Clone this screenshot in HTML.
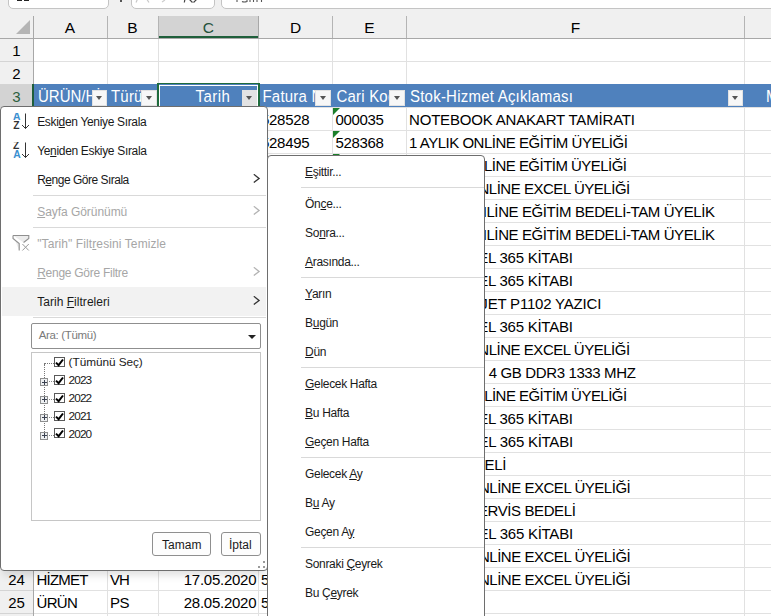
<!DOCTYPE html><html><head><meta charset="utf-8"><style>
*{box-sizing:border-box;margin:0;padding:0}
html,body{width:771px;height:616px;overflow:hidden;background:#fff;font-family:"Liberation Sans",sans-serif}
body{position:relative}
div,svg{position:absolute;white-space:nowrap}
u{text-decoration:underline;text-underline-offset:1px;text-decoration-thickness:1px}
</style></head><body>
<div style="left:0px;top:0px;width:771px;height:38px;background:#f0f0f0;"></div>
<div style="left:8px;top:-22px;width:101px;height:31px;background:#fff;border:1px solid #c4c4c4;border-radius:5px"></div>
<div style="left:17px;top:0px;width:4.5px;height:1px;background:#222;"></div>
<div style="left:24px;top:0px;width:4.5px;height:1px;background:#222;"></div>
<div style="left:119.5px;top:0px;width:2px;height:1.5px;background:#555;"></div>
<div style="left:131px;top:-22px;width:84px;height:31px;background:#fff;border:1px solid #c4c4c4;border-radius:5px"></div>
<svg style="left:135px;top:0" width="70" height="4"><path d="M3 -2 L1 2.5 M11 -2 L14 2.5" stroke="#c8c8c8" stroke-width="1.2"/><path d="M27 2 L30 0" stroke="#ccc" stroke-width="1.2"/><path d="M50 -1 L49.3 2.5 M54 -1 L57.5 2.5 M62 -1 L58.5 2.5" stroke="#444" stroke-width="1.2" fill="none"/></svg>
<div style="left:221px;top:-22px;width:600px;height:31px;background:#fff;border:1px solid #c4c4c4;border-radius:5px"></div>
<svg style="left:228px;top:0" width="40" height="4"><path d="M9 -1 V2 M14 1.5 Q16 2.5 19 1.5 V-1 M22 -1 V2 M25.5 -1 V2 M29 -1 V2 M33.5 -1 V2" stroke="#555" stroke-width="1.1" fill="none"/></svg>
<div style="left:16px;top:20px;width:0;height:0;border-left:14px solid transparent;border-bottom:14px solid #b5b5b5"></div>
<div style="left:33px;top:16px;width:1px;height:22px;background:#b4b4b4;"></div>
<div style="left:107px;top:16px;width:1px;height:22px;background:#b4b4b4;"></div>
<div style="left:158px;top:16px;width:1px;height:22px;background:#b4b4b4;"></div>
<div style="left:258px;top:16px;width:1px;height:22px;background:#b4b4b4;"></div>
<div style="left:332px;top:16px;width:1px;height:22px;background:#b4b4b4;"></div>
<div style="left:406px;top:16px;width:1px;height:22px;background:#b4b4b4;"></div>
<div style="left:744px;top:16px;width:1px;height:22px;background:#b4b4b4;"></div>
<div style="left:33px;top:16px;width:1px;height:22px;background:#a8a8a8;"></div>
<div style="left:159px;top:16px;width:100px;height:22px;background:#d3d3d3;"></div>
<div style="left:159px;top:36px;width:100px;height:2px;background:#1f5f3b;"></div>
<div style="left:258px;top:16px;width:1px;height:22px;background:#a8a8a8;"></div>
<div style="left:33px;top:19.88px;width:74px;text-align:center;font-size:15.5px;line-height:15.5px;color:#000">A</div>
<div style="left:107px;top:19.88px;width:51px;text-align:center;font-size:15.5px;line-height:15.5px;color:#000">B</div>
<div style="left:158px;top:19.88px;width:100.5px;text-align:center;font-size:15.5px;line-height:15.5px;color:#24513a">C</div>
<div style="left:258.5px;top:19.88px;width:74.0px;text-align:center;font-size:15.5px;line-height:15.5px;color:#000">D</div>
<div style="left:332.5px;top:19.88px;width:74.0px;text-align:center;font-size:15.5px;line-height:15.5px;color:#000">E</div>
<div style="left:406.5px;top:19.88px;width:338.0px;text-align:center;font-size:15.5px;line-height:15.5px;color:#000">F</div>
<div style="left:0px;top:38px;width:771px;height:1px;background:#a8a8a8;"></div>
<div style="left:0px;top:39px;width:33px;height:600px;background:#f0f0f0;"></div>
<div style="left:33px;top:38px;width:1px;height:600px;background:#a8a8a8;"></div>
<div style="left:0;top:43.30px;width:33px;text-align:center;font-size:15px;line-height:15px;color:#000">1</div>
<div style="left:0px;top:61px;width:33px;height:1px;background:#d4d4d4;"></div>
<div style="left:0;top:66.30px;width:33px;text-align:center;font-size:15px;line-height:15px;color:#000">2</div>
<div style="left:0px;top:84px;width:33px;height:1px;background:#d4d4d4;"></div>
<div style="left:0px;top:85px;width:33px;height:22px;background:#d3d3d3;"></div>
<div style="left:32px;top:84px;width:2px;height:23px;background:#1f5f3b;"></div>
<div style="left:0;top:89.30px;width:33px;text-align:center;font-size:15px;line-height:15px;color:#2b5e40">3</div>
<div style="left:0px;top:107px;width:33px;height:1px;background:#d4d4d4;"></div>
<div style="left:0;top:112.30px;width:33px;text-align:center;font-size:15px;line-height:15px;color:#000">4</div>
<div style="left:0px;top:130px;width:33px;height:1px;background:#d4d4d4;"></div>
<div style="left:0;top:135.30px;width:33px;text-align:center;font-size:15px;line-height:15px;color:#000">5</div>
<div style="left:0px;top:153px;width:33px;height:1px;background:#d4d4d4;"></div>
<div style="left:0;top:158.30px;width:33px;text-align:center;font-size:15px;line-height:15px;color:#000">6</div>
<div style="left:0px;top:176px;width:33px;height:1px;background:#d4d4d4;"></div>
<div style="left:0;top:181.30px;width:33px;text-align:center;font-size:15px;line-height:15px;color:#000">7</div>
<div style="left:0px;top:199px;width:33px;height:1px;background:#d4d4d4;"></div>
<div style="left:0;top:204.30px;width:33px;text-align:center;font-size:15px;line-height:15px;color:#000">8</div>
<div style="left:0px;top:222px;width:33px;height:1px;background:#d4d4d4;"></div>
<div style="left:0;top:227.30px;width:33px;text-align:center;font-size:15px;line-height:15px;color:#000">9</div>
<div style="left:0px;top:245px;width:33px;height:1px;background:#d4d4d4;"></div>
<div style="left:0;top:250.30px;width:33px;text-align:center;font-size:15px;line-height:15px;color:#000">10</div>
<div style="left:0px;top:268px;width:33px;height:1px;background:#d4d4d4;"></div>
<div style="left:0;top:273.30px;width:33px;text-align:center;font-size:15px;line-height:15px;color:#000">11</div>
<div style="left:0px;top:291px;width:33px;height:1px;background:#d4d4d4;"></div>
<div style="left:0;top:296.30px;width:33px;text-align:center;font-size:15px;line-height:15px;color:#000">12</div>
<div style="left:0px;top:314px;width:33px;height:1px;background:#d4d4d4;"></div>
<div style="left:0;top:319.30px;width:33px;text-align:center;font-size:15px;line-height:15px;color:#000">13</div>
<div style="left:0px;top:337px;width:33px;height:1px;background:#d4d4d4;"></div>
<div style="left:0;top:342.30px;width:33px;text-align:center;font-size:15px;line-height:15px;color:#000">14</div>
<div style="left:0px;top:360px;width:33px;height:1px;background:#d4d4d4;"></div>
<div style="left:0;top:365.30px;width:33px;text-align:center;font-size:15px;line-height:15px;color:#000">15</div>
<div style="left:0px;top:383px;width:33px;height:1px;background:#d4d4d4;"></div>
<div style="left:0;top:388.30px;width:33px;text-align:center;font-size:15px;line-height:15px;color:#000">16</div>
<div style="left:0px;top:406px;width:33px;height:1px;background:#d4d4d4;"></div>
<div style="left:0;top:411.30px;width:33px;text-align:center;font-size:15px;line-height:15px;color:#000">17</div>
<div style="left:0px;top:429px;width:33px;height:1px;background:#d4d4d4;"></div>
<div style="left:0;top:434.30px;width:33px;text-align:center;font-size:15px;line-height:15px;color:#000">18</div>
<div style="left:0px;top:452px;width:33px;height:1px;background:#d4d4d4;"></div>
<div style="left:0;top:457.30px;width:33px;text-align:center;font-size:15px;line-height:15px;color:#000">19</div>
<div style="left:0px;top:475px;width:33px;height:1px;background:#d4d4d4;"></div>
<div style="left:0;top:480.30px;width:33px;text-align:center;font-size:15px;line-height:15px;color:#000">20</div>
<div style="left:0px;top:498px;width:33px;height:1px;background:#d4d4d4;"></div>
<div style="left:0;top:503.30px;width:33px;text-align:center;font-size:15px;line-height:15px;color:#000">21</div>
<div style="left:0px;top:521px;width:33px;height:1px;background:#d4d4d4;"></div>
<div style="left:0;top:526.30px;width:33px;text-align:center;font-size:15px;line-height:15px;color:#000">22</div>
<div style="left:0px;top:544px;width:33px;height:1px;background:#d4d4d4;"></div>
<div style="left:0;top:549.30px;width:33px;text-align:center;font-size:15px;line-height:15px;color:#000">23</div>
<div style="left:0px;top:567px;width:33px;height:1px;background:#d4d4d4;"></div>
<div style="left:0;top:572.30px;width:33px;text-align:center;font-size:15px;line-height:15px;color:#000">24</div>
<div style="left:0px;top:590px;width:33px;height:1px;background:#d4d4d4;"></div>
<div style="left:0;top:595.30px;width:33px;text-align:center;font-size:15px;line-height:15px;color:#000">25</div>
<div style="left:0px;top:613px;width:33px;height:1px;background:#d4d4d4;"></div>
<div style="left:0;top:618.30px;width:33px;text-align:center;font-size:15px;line-height:15px;color:#000">26</div>
<div style="left:0px;top:636px;width:33px;height:1px;background:#d4d4d4;"></div>
<div style="left:34px;top:61px;width:740px;height:1px;background:#e1e1e1;"></div>
<div style="left:34px;top:84px;width:740px;height:1px;background:#e1e1e1;"></div>
<div style="left:34px;top:107px;width:740px;height:1px;background:#e1e1e1;"></div>
<div style="left:34px;top:130px;width:740px;height:1px;background:#e1e1e1;"></div>
<div style="left:34px;top:153px;width:740px;height:1px;background:#e1e1e1;"></div>
<div style="left:34px;top:176px;width:740px;height:1px;background:#e1e1e1;"></div>
<div style="left:34px;top:199px;width:740px;height:1px;background:#e1e1e1;"></div>
<div style="left:34px;top:222px;width:740px;height:1px;background:#e1e1e1;"></div>
<div style="left:34px;top:245px;width:740px;height:1px;background:#e1e1e1;"></div>
<div style="left:34px;top:268px;width:740px;height:1px;background:#e1e1e1;"></div>
<div style="left:34px;top:291px;width:740px;height:1px;background:#e1e1e1;"></div>
<div style="left:34px;top:314px;width:740px;height:1px;background:#e1e1e1;"></div>
<div style="left:34px;top:337px;width:740px;height:1px;background:#e1e1e1;"></div>
<div style="left:34px;top:360px;width:740px;height:1px;background:#e1e1e1;"></div>
<div style="left:34px;top:383px;width:740px;height:1px;background:#e1e1e1;"></div>
<div style="left:34px;top:406px;width:740px;height:1px;background:#e1e1e1;"></div>
<div style="left:34px;top:429px;width:740px;height:1px;background:#e1e1e1;"></div>
<div style="left:34px;top:452px;width:740px;height:1px;background:#e1e1e1;"></div>
<div style="left:34px;top:475px;width:740px;height:1px;background:#e1e1e1;"></div>
<div style="left:34px;top:498px;width:740px;height:1px;background:#e1e1e1;"></div>
<div style="left:34px;top:521px;width:740px;height:1px;background:#e1e1e1;"></div>
<div style="left:34px;top:544px;width:740px;height:1px;background:#e1e1e1;"></div>
<div style="left:34px;top:567px;width:740px;height:1px;background:#e1e1e1;"></div>
<div style="left:34px;top:590px;width:740px;height:1px;background:#e1e1e1;"></div>
<div style="left:34px;top:613px;width:740px;height:1px;background:#e1e1e1;"></div>
<div style="left:34px;top:636px;width:740px;height:1px;background:#e1e1e1;"></div>
<div style="left:107px;top:39px;width:1px;height:600px;background:#e1e1e1;"></div>
<div style="left:158px;top:39px;width:1px;height:600px;background:#e1e1e1;"></div>
<div style="left:258px;top:39px;width:1px;height:600px;background:#e1e1e1;"></div>
<div style="left:332px;top:39px;width:1px;height:600px;background:#e1e1e1;"></div>
<div style="left:406px;top:39px;width:1px;height:600px;background:#e1e1e1;"></div>
<div style="left:744px;top:39px;width:1px;height:600px;background:#e1e1e1;"></div>
<div style="left:34px;top:84px;width:740px;height:23px;background:#4f81bd;"></div>
<div style="left:34px;top:84px;width:73px;height:22px;overflow:hidden"><div style="left:4.00px;top:5.30px;font-size:15px;line-height:15px;color:#fff;letter-spacing:0px;transform:scaleY(1.1);transform-origin:0 12.7px">ÜRÜN/HİZMET</div></div>
<div style="left:108px;top:84px;width:50px;height:22px;overflow:hidden"><div style="left:3.00px;top:5.30px;font-size:15px;line-height:15px;color:#fff;letter-spacing:0.2px;transform:scaleY(1.1);transform-origin:0 12.7px">Türü</div></div>
<div style="left:159px;top:84px;width:99px;height:22px;overflow:hidden"><div style="left:36.60px;top:5.30px;font-size:15px;line-height:15px;color:#fff;letter-spacing:0.45px;transform:scaleY(1.1);transform-origin:0 12.7px">Tarih</div></div>
<div style="left:259px;top:84px;width:73px;height:22px;overflow:hidden"><div style="left:3.50px;top:5.30px;font-size:15px;line-height:15px;color:#fff;letter-spacing:0.2px;transform:scaleY(1.1);transform-origin:0 12.7px">Fatura No</div></div>
<div style="left:333px;top:84px;width:73px;height:22px;overflow:hidden"><div style="left:3.50px;top:5.30px;font-size:15px;line-height:15px;color:#fff;letter-spacing:0.2px;transform:scaleY(1.1);transform-origin:0 12.7px">Cari Kodu</div></div>
<div style="left:407px;top:84px;width:337px;height:22px;overflow:hidden"><div style="left:3.00px;top:5.30px;font-size:15px;line-height:15px;color:#fff;letter-spacing:0.22px;transform:scaleY(1.1);transform-origin:0 12.7px">Stok-Hizmet Açıklaması</div></div>
<div style="left:745px;top:84px;width:26px;height:22px;overflow:hidden"><div style="left:21.00px;top:5.30px;font-size:15px;line-height:15px;color:#fff;letter-spacing:0.2px;transform:scaleY(1.1);transform-origin:0 12.7px">M</div></div>
<div style="left:91.5px;top:89.5px;width:15.5px;height:16px;background:#f7f7f7;border:1px solid #e2e2e2"></div>
<div style="left:96.0px;top:96px;width:0;height:0;border-left:3.5px solid transparent;border-right:3.5px solid transparent;border-top:4px solid #555"></div>
<div style="left:141.2px;top:89.5px;width:15.5px;height:16px;background:#f7f7f7;border:1px solid #e2e2e2"></div>
<div style="left:145.7px;top:96px;width:0;height:0;border-left:3.5px solid transparent;border-right:3.5px solid transparent;border-top:4px solid #555"></div>
<div style="left:315.2px;top:89.5px;width:15.5px;height:16px;background:#f7f7f7;border:1px solid #e2e2e2"></div>
<div style="left:319.7px;top:96px;width:0;height:0;border-left:3.5px solid transparent;border-right:3.5px solid transparent;border-top:4px solid #555"></div>
<div style="left:389.4px;top:89.5px;width:15.5px;height:16px;background:#f7f7f7;border:1px solid #e2e2e2"></div>
<div style="left:393.9px;top:96px;width:0;height:0;border-left:3.5px solid transparent;border-right:3.5px solid transparent;border-top:4px solid #555"></div>
<div style="left:727.5px;top:89.5px;width:15.5px;height:16px;background:#f7f7f7;border:1px solid #e2e2e2"></div>
<div style="left:732.0px;top:96px;width:0;height:0;border-left:3.5px solid transparent;border-right:3.5px solid transparent;border-top:4px solid #555"></div>
<div style="left:157px;top:83px;width:102.7px;height:25px;border:2px solid #1e6b3c;border-top-width:1.6px"></div>
<div style="left:159px;top:84.6px;width:98.8px;height:22px;border:1px solid #fff"></div>
<div style="left:241.8px;top:89.5px;width:15.5px;height:16px;background:#e3e3e3;border:1px solid #e3e3e3"></div>
<div style="left:246.3px;top:96px;width:0;height:0;border-left:3.5px solid transparent;border-right:3.5px solid transparent;border-top:4px solid #555"></div>
<div style="left:409.00px;top:112.30px;font-size:15px;line-height:15px;color:#000;letter-spacing:-0.18px;">NOTEBOOK ANAKART TAMİRATI</div>
<div style="left:409.00px;top:135.30px;font-size:15px;line-height:15px;color:#000;letter-spacing:-0.48px;">1 AYLIK ONLİNE EĞİTİM ÜYELİĞİ</div>
<div style="right:144.50px;top:158.30px;font-size:15px;line-height:15px;letter-spacing:-0.53px;color:#000">1 AYLIK ONLİNE EĞİTİM ÜYELİĞİ</div>
<div style="right:141.20px;top:181.30px;font-size:15px;line-height:15px;letter-spacing:-0.47px;color:#000">1 AYLIK ONLİNE EXCEL ÜYELİĞİ</div>
<div style="right:56.40px;top:204.30px;font-size:15px;line-height:15px;letter-spacing:-0.4px;color:#000">1 YILLIK ONLİNE EĞİTİM BEDELİ-TAM ÜYELİK</div>
<div style="right:56.40px;top:227.30px;font-size:15px;line-height:15px;letter-spacing:-0.4px;color:#000">1 YILLIK ONLİNE EĞİTİM BEDELİ-TAM ÜYELİK</div>
<div style="right:198.40px;top:250.30px;font-size:15px;line-height:15px;letter-spacing:-0.25px;color:#000">MICROSOFT EXCEL 365 KİTABI</div>
<div style="right:198.40px;top:273.30px;font-size:15px;line-height:15px;letter-spacing:-0.25px;color:#000">MICROSOFT EXCEL 365 KİTABI</div>
<div style="right:169.90px;top:296.30px;font-size:15px;line-height:15px;letter-spacing:-0.2px;color:#000">HP LASERJET P1102 YAZICI</div>
<div style="right:198.40px;top:319.30px;font-size:15px;line-height:15px;letter-spacing:-0.25px;color:#000">MICROSOFT EXCEL 365 KİTABI</div>
<div style="right:141.30px;top:342.30px;font-size:15px;line-height:15px;letter-spacing:-0.47px;color:#000">1 AYLIK ONLİNE EXCEL ÜYELİĞİ</div>
<div style="right:135.50px;top:365.30px;font-size:15px;line-height:15px;letter-spacing:-0.37px;color:#000">RAM 4 GB DDR3 1333 MHZ</div>
<div style="right:144.40px;top:388.30px;font-size:15px;line-height:15px;letter-spacing:-0.53px;color:#000">1 AYLIK ONLİNE EĞİTİM ÜYELİĞİ</div>
<div style="right:198.40px;top:411.30px;font-size:15px;line-height:15px;letter-spacing:-0.25px;color:#000">MICROSOFT EXCEL 365 KİTABI</div>
<div style="right:198.20px;top:434.30px;font-size:15px;line-height:15px;letter-spacing:-0.25px;color:#000">MICROSOFT EXCEL 365 KİTABI</div>
<div style="right:264.80px;top:457.30px;font-size:15px;line-height:15px;letter-spacing:-0.25px;color:#000">KURULUM BEDELİ</div>
<div style="right:140.70px;top:480.30px;font-size:15px;line-height:15px;letter-spacing:-0.47px;color:#000">1 AYLIK ONLİNE EXCEL ÜYELİĞİ</div>
<div style="right:195.60px;top:503.30px;font-size:15px;line-height:15px;letter-spacing:-0.4px;color:#000">TEKNİK SERVİS BEDELİ</div>
<div style="right:198.20px;top:526.30px;font-size:15px;line-height:15px;letter-spacing:-0.25px;color:#000">MICROSOFT EXCEL 365 KİTABI</div>
<div style="right:140.70px;top:549.30px;font-size:15px;line-height:15px;letter-spacing:-0.47px;color:#000">1 AYLIK ONLİNE EXCEL ÜYELİĞİ</div>
<div style="right:140.70px;top:572.30px;font-size:15px;line-height:15px;letter-spacing:-0.47px;color:#000">1 AYLIK ONLİNE EXCEL ÜYELİĞİ</div>
<div style="left:261.00px;top:112.30px;font-size:15px;line-height:15px;color:#000;letter-spacing:-0.3px;">528528</div>
<div style="left:261.00px;top:135.30px;font-size:15px;line-height:15px;color:#000;letter-spacing:-0.3px;">528495</div>
<div style="left:335.50px;top:112.30px;font-size:15px;line-height:15px;color:#000;letter-spacing:-0.35px;">000035</div>
<div style="left:335.50px;top:135.30px;font-size:15px;line-height:15px;color:#000;letter-spacing:-0.35px;">528368</div>
<div style="left:333px;top:108px;width:0;height:0;border-top:7px solid #1b7f2a;border-right:7px solid transparent"></div>
<div style="left:333px;top:131px;width:0;height:0;border-top:7px solid #1b7f2a;border-right:7px solid transparent"></div>
<div style="left:333px;top:154px;width:0;height:0;border-top:7px solid #1b7f2a;border-right:7px solid transparent"></div>
<div style="left:36.50px;top:572.30px;font-size:15px;line-height:15px;color:#000;letter-spacing:-0.8px;">HİZMET</div>
<div style="left:110.00px;top:572.30px;font-size:15px;line-height:15px;color:#000;letter-spacing:-0.9px;">VH</div>
<div style="right:514.70px;top:572.30px;font-size:15px;line-height:15px;letter-spacing:-0.25px;color:#000">17.05.2020</div>
<div style="left:261.00px;top:572.30px;font-size:15px;line-height:15px;color:#000;">528</div>
<div style="left:36.50px;top:595.30px;font-size:15px;line-height:15px;color:#000;letter-spacing:-0.7px;">ÜRÜN</div>
<div style="left:110.00px;top:595.30px;font-size:15px;line-height:15px;color:#000;letter-spacing:-0.5px;">PS</div>
<div style="right:514.70px;top:595.30px;font-size:15px;line-height:15px;letter-spacing:-0.25px;color:#000">28.05.2020</div>
<div style="left:261.00px;top:595.30px;font-size:15px;line-height:15px;color:#000;">528</div>
<div style="left:0px;top:106px;width:268px;height:465px;background:#fff;border:1px solid #6e6e6e;border-radius:4px;box-shadow:0 7px 9px -3px rgba(0,0,0,.13)"></div>
<div style="left:2px;top:287px;width:264px;height:29px;background:#f2f2f2;"></div>
<div style="left:37.20px;top:115.84px;font-size:12px;line-height:12px;color:#1a1a1a;letter-spacing:-0.33px;">Eski<u>d</u>en Yeniye Sırala</div>
<div style="left:37.20px;top:144.84px;font-size:12px;line-height:12px;color:#1a1a1a;letter-spacing:-0.33px;">Ye<u>n</u>iden Eskiye Sırala</div>
<div style="left:37.20px;top:173.84px;font-size:12px;line-height:12px;color:#1a1a1a;letter-spacing:-0.5px;">R<u>e</u>nge Göre Sırala</div>
<svg style="left:252px;top:174px" width="9" height="10"><path d="M1.8 0.3 L7.1 4.4 L1.8 8.6" fill="none" stroke="#333" stroke-width="1.3"/></svg>
<div style="left:37.20px;top:205.84px;font-size:12px;line-height:12px;color:#a6a6a6;letter-spacing:-0.05px;"><u>S</u>ayfa Görünümü</div>
<svg style="left:252px;top:206px" width="9" height="10"><path d="M1.8 0.3 L7.1 4.4 L1.8 8.6" fill="none" stroke="#b3b3b3" stroke-width="1.3"/></svg>
<div style="left:37.20px;top:237.84px;font-size:12px;line-height:12px;color:#a6a6a6;letter-spacing:0.1px;">"Tarih" Filt<u>r</u>esini Temizle</div>
<div style="left:37.20px;top:266.84px;font-size:12px;line-height:12px;color:#a6a6a6;letter-spacing:-0.27px;"><u>R</u>enge Göre Filtre</div>
<svg style="left:252px;top:267px" width="9" height="10"><path d="M1.8 0.3 L7.1 4.4 L1.8 8.6" fill="none" stroke="#b3b3b3" stroke-width="1.3"/></svg>
<div style="left:37.20px;top:295.84px;font-size:12px;line-height:12px;color:#1a1a1a;letter-spacing:0.03px;">Tarih <u>F</u>iltreleri</div>
<svg style="left:252px;top:296px" width="9" height="10"><path d="M1.8 0.3 L7.1 4.4 L1.8 8.6" fill="none" stroke="#333" stroke-width="1.3"/></svg>
<div style="left:33px;top:195px;width:233px;height:1px;background:#d9d9d9;"></div>
<div style="left:33px;top:227px;width:233px;height:1px;background:#d9d9d9;"></div>
<div style="left:33px;top:317px;width:233px;height:1px;background:#d9d9d9;"></div>
<svg style="left:11px;top:113px" width="22" height="20" viewBox="0 0 22 20"><text x="2" y="7" font-family="Liberation Sans" font-weight="bold" font-size="10.3" fill="#3a8fd0">A</text><text x="2.3" y="16" font-family="Liberation Sans" font-weight="bold" font-size="10.3" fill="#333">Z</text><path d="M14.5 0.5 V15.5 M11 12 L14.5 15.5 L18 12" fill="none" stroke="#333" stroke-width="1"/></svg>
<svg style="left:11px;top:142px" width="22" height="20" viewBox="0 0 22 20"><text x="2" y="7" font-family="Liberation Sans" font-weight="bold" font-size="10.3" fill="#333">Z</text><text x="2.3" y="16" font-family="Liberation Sans" font-weight="bold" font-size="10.3" fill="#3a8fd0">A</text><path d="M14.5 0.5 V15.5 M11 12 L14.5 15.5 L18 12" fill="none" stroke="#333" stroke-width="1"/></svg>
<svg style="left:12px;top:234px" width="20" height="18" viewBox="0 0 20 18"><path d="M1 1.5 H16.8 V4.4 L11.6 8.5 M1 1.5 V4.4 L7.2 9.5 V16.5" fill="#ececec" stroke="#8f8f8f" stroke-width="1.1"/><path d="M10.4 10 L16.8 16.5 M16.8 10 L10.4 16.5" stroke="#999" stroke-width="1"/></svg>
<div style="left:31px;top:323px;width:230px;height:26px;border:1px solid #8f8f8f;border-radius:2px;background:#fff"></div>
<div style="left:38.70px;top:330.26px;font-size:11.5px;line-height:11.5px;color:#7a7a7a;letter-spacing:-0.35px;">Ara: (Tümü)</div>
<div style="left:248px;top:335px;width:0;height:0;border-left:4px solid transparent;border-right:4px solid transparent;border-top:4.5px solid #222"></div>
<div style="left:31px;top:352px;width:230px;height:169px;border:1px solid #c6c6c6;background:#fff"></div>
<div style="left:44px;top:364px;width:0;height:68px;border-left:1px dotted #777"></div>
<div style="left:44px;top:363px;width:10px;height:0;border-top:1px dotted #777"></div>
<div style="left:54.3px;top:356.9px;width:10.5px;height:10px;border:1px solid #5a5a5a;background:#fff"><svg style="left:0;top:0" width="9" height="9" viewBox="0 0 9 9"><path d="M1 4.6 L3.6 7.2 L8 1.5" fill="none" stroke="#000" stroke-width="2"/></svg></div>
<div style="left:68.60px;top:356.71px;font-size:11.8px;line-height:11.8px;color:#1a1a1a;letter-spacing:-0.05px;">(Tümünü Seç)</div>
<div style="left:54.3px;top:374.7px;width:10.5px;height:10px;border:1px solid #5a5a5a;background:#fff"><svg style="left:0;top:0" width="9" height="9" viewBox="0 0 9 9"><path d="M1 4.6 L3.6 7.2 L8 1.5" fill="none" stroke="#000" stroke-width="2"/></svg></div>
<div style="left:68.60px;top:375.01px;font-size:11.8px;line-height:11.8px;color:#1a1a1a;letter-spacing:-0.9px;">2023</div>
<div style="left:40.4px;top:378.0px;width:8px;height:8px;border:1px solid #8e8f8f;background:#eef0f2"></div>
<div style="left:42px;top:381.5px;width:5px;height:1px;background:#3a4150;"></div>
<div style="left:44px;top:379.5px;width:1px;height:5px;background:#3a4150;"></div>
<div style="left:48.8px;top:381.3px;width:5px;height:0;border-top:1px dotted #888"></div>
<div style="left:54.3px;top:392.5px;width:10.5px;height:10px;border:1px solid #5a5a5a;background:#fff"><svg style="left:0;top:0" width="9" height="9" viewBox="0 0 9 9"><path d="M1 4.6 L3.6 7.2 L8 1.5" fill="none" stroke="#000" stroke-width="2"/></svg></div>
<div style="left:68.60px;top:393.01px;font-size:11.8px;line-height:11.8px;color:#1a1a1a;letter-spacing:-0.9px;">2022</div>
<div style="left:40.4px;top:395.8px;width:8px;height:8px;border:1px solid #8e8f8f;background:#eef0f2"></div>
<div style="left:42px;top:399.3px;width:5px;height:1px;background:#3a4150;"></div>
<div style="left:44px;top:397.3px;width:1px;height:5px;background:#3a4150;"></div>
<div style="left:48.8px;top:399.1px;width:5px;height:0;border-top:1px dotted #888"></div>
<div style="left:54.3px;top:410.5px;width:10.5px;height:10px;border:1px solid #5a5a5a;background:#fff"><svg style="left:0;top:0" width="9" height="9" viewBox="0 0 9 9"><path d="M1 4.6 L3.6 7.2 L8 1.5" fill="none" stroke="#000" stroke-width="2"/></svg></div>
<div style="left:68.60px;top:411.01px;font-size:11.8px;line-height:11.8px;color:#1a1a1a;letter-spacing:-0.9px;">2021</div>
<div style="left:40.4px;top:413.8px;width:8px;height:8px;border:1px solid #8e8f8f;background:#eef0f2"></div>
<div style="left:42px;top:417.3px;width:5px;height:1px;background:#3a4150;"></div>
<div style="left:44px;top:415.3px;width:1px;height:5px;background:#3a4150;"></div>
<div style="left:48.8px;top:417.1px;width:5px;height:0;border-top:1px dotted #888"></div>
<div style="left:54.3px;top:428.4px;width:10.5px;height:10px;border:1px solid #5a5a5a;background:#fff"><svg style="left:0;top:0" width="9" height="9" viewBox="0 0 9 9"><path d="M1 4.6 L3.6 7.2 L8 1.5" fill="none" stroke="#000" stroke-width="2"/></svg></div>
<div style="left:68.60px;top:429.01px;font-size:11.8px;line-height:11.8px;color:#1a1a1a;letter-spacing:-0.9px;">2020</div>
<div style="left:40.4px;top:431.7px;width:8px;height:8px;border:1px solid #8e8f8f;background:#eef0f2"></div>
<div style="left:42px;top:435.2px;width:5px;height:1px;background:#3a4150;"></div>
<div style="left:44px;top:433.2px;width:1px;height:5px;background:#3a4150;"></div>
<div style="left:48.8px;top:435.0px;width:5px;height:0;border-top:1px dotted #888"></div>
<div style="left:152px;top:532px;width:58.5px;height:23.5px;border:1px solid #8f8f8f;border-radius:3px;background:#fdfdfd"></div>
<div style="left:162.10px;top:539.34px;font-size:12px;line-height:12px;color:#1a1a1a;">Tamam</div>
<div style="left:220.5px;top:532px;width:40.5px;height:23.5px;border:1px solid #8f8f8f;border-radius:3px;background:#fdfdfd"></div>
<div style="left:229.00px;top:539.34px;font-size:12px;line-height:12px;color:#1a1a1a;">İptal</div>
<div style="left:263px;top:560.9px;width:2px;height:2px;background:#9a9a9a;"></div>
<div style="left:257.8px;top:565.9px;width:2px;height:2px;background:#9a9a9a;"></div>
<div style="left:263px;top:565.9px;width:2px;height:2px;background:#9a9a9a;"></div>
<div style="left:267px;top:155px;width:218px;height:500px;background:#fff;border:1px solid #6e6e6e;border-radius:4px;"></div>
<div style="left:305.10px;top:165.84px;font-size:12px;line-height:12px;color:#1a1a1a;letter-spacing:-0.33px;"><u>E</u>şittir...</div>
<div style="left:301px;top:187px;width:183px;height:1px;background:#d9d9d9;"></div>
<div style="left:305.10px;top:197.84px;font-size:12px;line-height:12px;color:#1a1a1a;letter-spacing:-0.33px;">Ön<u>c</u>e...</div>
<div style="left:305.10px;top:226.84px;font-size:12px;line-height:12px;color:#1a1a1a;letter-spacing:-0.33px;">So<u>n</u>ra...</div>
<div style="left:305.10px;top:255.84px;font-size:12px;line-height:12px;color:#1a1a1a;letter-spacing:-0.33px;"><u>A</u>rasında...</div>
<div style="left:301px;top:277px;width:183px;height:1px;background:#d9d9d9;"></div>
<div style="left:305.10px;top:287.84px;font-size:12px;line-height:12px;color:#1a1a1a;letter-spacing:-0.33px;"><u>Y</u>arın</div>
<div style="left:305.10px;top:316.84px;font-size:12px;line-height:12px;color:#1a1a1a;letter-spacing:-0.33px;">B<u>u</u>gün</div>
<div style="left:305.10px;top:345.84px;font-size:12px;line-height:12px;color:#1a1a1a;letter-spacing:-0.33px;"><u>D</u>ün</div>
<div style="left:301px;top:367px;width:183px;height:1px;background:#d9d9d9;"></div>
<div style="left:305.10px;top:377.84px;font-size:12px;line-height:12px;color:#1a1a1a;letter-spacing:-0.33px;"><u>G</u>elecek Hafta</div>
<div style="left:305.10px;top:406.84px;font-size:12px;line-height:12px;color:#1a1a1a;letter-spacing:-0.33px;"><u>B</u>u Hafta</div>
<div style="left:305.10px;top:435.84px;font-size:12px;line-height:12px;color:#1a1a1a;letter-spacing:-0.33px;"><u>G</u>eçen Hafta</div>
<div style="left:301px;top:457px;width:183px;height:1px;background:#d9d9d9;"></div>
<div style="left:305.10px;top:467.84px;font-size:12px;line-height:12px;color:#1a1a1a;letter-spacing:-0.33px;">Gelecek <u>A</u>y</div>
<div style="left:305.10px;top:496.84px;font-size:12px;line-height:12px;color:#1a1a1a;letter-spacing:-0.33px;">B<u>u</u> Ay</div>
<div style="left:305.10px;top:525.84px;font-size:12px;line-height:12px;color:#1a1a1a;letter-spacing:-0.33px;">Geçen A<u>y</u></div>
<div style="left:301px;top:547px;width:183px;height:1px;background:#d9d9d9;"></div>
<div style="left:305.10px;top:557.84px;font-size:12px;line-height:12px;color:#1a1a1a;letter-spacing:-0.33px;">Sonraki <u>Ç</u>eyrek</div>
<div style="left:305.10px;top:586.84px;font-size:12px;line-height:12px;color:#1a1a1a;letter-spacing:-0.33px;">Bu Ç<u>e</u>yrek</div>
</body></html>
